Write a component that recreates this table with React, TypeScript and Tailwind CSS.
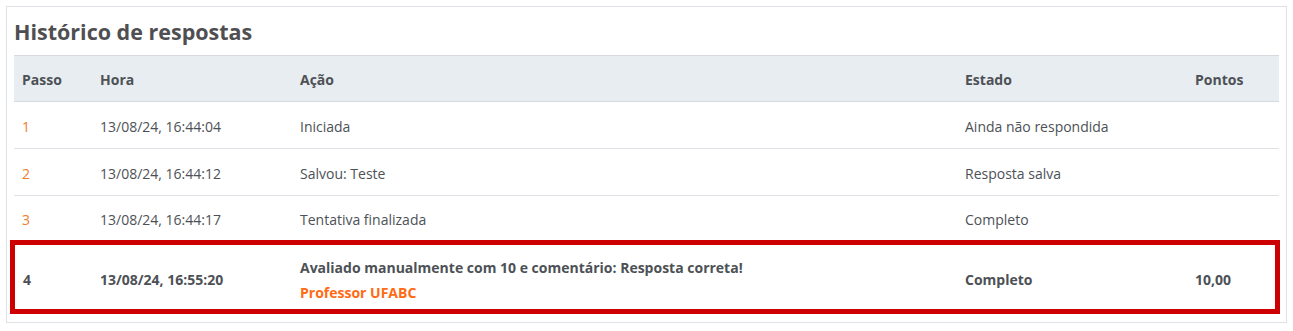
import React from 'react';

type Row = { step: string; time: string; action: string; state: string; points: string };

const ROWS: Row[] = [
  { step: '1', time: '13/08/24, 16:44:04', action: 'Iniciada', state: 'Ainda não respondida', points: '' },
  { step: '2', time: '13/08/24, 16:44:12', action: 'Salvou: Teste', state: 'Resposta salva', points: '' },
  { step: '3', time: '13/08/24, 16:44:17', action: 'Tentativa finalizada', state: 'Completo', points: '' },
];

const cols = 'grid grid-cols-[78px_200px_665px_230px_92px]';

const App: React.FC = () => {
  return (
    <div className="bg-white w-[1293px] h-[331px] pt-[6px] pl-[6px] font-['Open_Sans',sans-serif] text-[14px] text-[#4d5156]">
      <div className="w-[1281px] h-[317px] border border-[#dee2e6] px-[7px]">
        <h3 className="h-[48px] pt-[10px] text-[21.5px] leading-[30px] font-bold text-[#4f4f52]">Histórico de respostas</h3>

        {/* header */}
        <div className={`${cols} h-[47px] pt-[2px] items-center bg-[#e8edf1] border-y border-[#d6dadf] font-bold`}>
          <div className="pl-2">Passo</div>
          <div className="pl-2">Hora</div>
          <div className="pl-2">Ação</div>
          <div className="pl-2">Estado</div>
          <div className="pl-2">Pontos</div>
        </div>

        {ROWS.map((r, i) => (
          <div
            key={r.step}
            className={`${cols} items-center pt-[2px] ${i < 2 ? 'h-[47px] border-b border-[#dee2e6]' : 'h-[44px]'}`}
          >
            <div className="pl-2 text-[#f07c2b]">{r.step}</div>
            <div className="pl-2">{r.time}</div>
            <div className="pl-2">{r.action}</div>
            <div className="pl-2">{r.state}</div>
            <div className="pl-2">{r.points}</div>
          </div>
        ))}

        {/* highlighted last step */}
        <div className="grid grid-cols-[77px_200px_665px_230px_88px] items-center h-[74px] pt-[5px] -ml-[4px] -mr-[1px] border-[5px] border-[#cc0000] font-bold">
          <div className="pl-2">4</div>
          <div className="pl-2">13/08/24, 16:55:20</div>
          <div className="pl-2 flex flex-col gap-[4px] leading-[21px]">
            <span>Avaliado manualmente com 10 e comentário: Resposta correta!</span>
            <span className="text-[#ff6a13]">Professor UFABC</span>
          </div>
          <div className="pl-2">Completo</div>
          <div className="pl-2">10,00</div>
        </div>
      </div>
    </div>
  );
};

export default App;
